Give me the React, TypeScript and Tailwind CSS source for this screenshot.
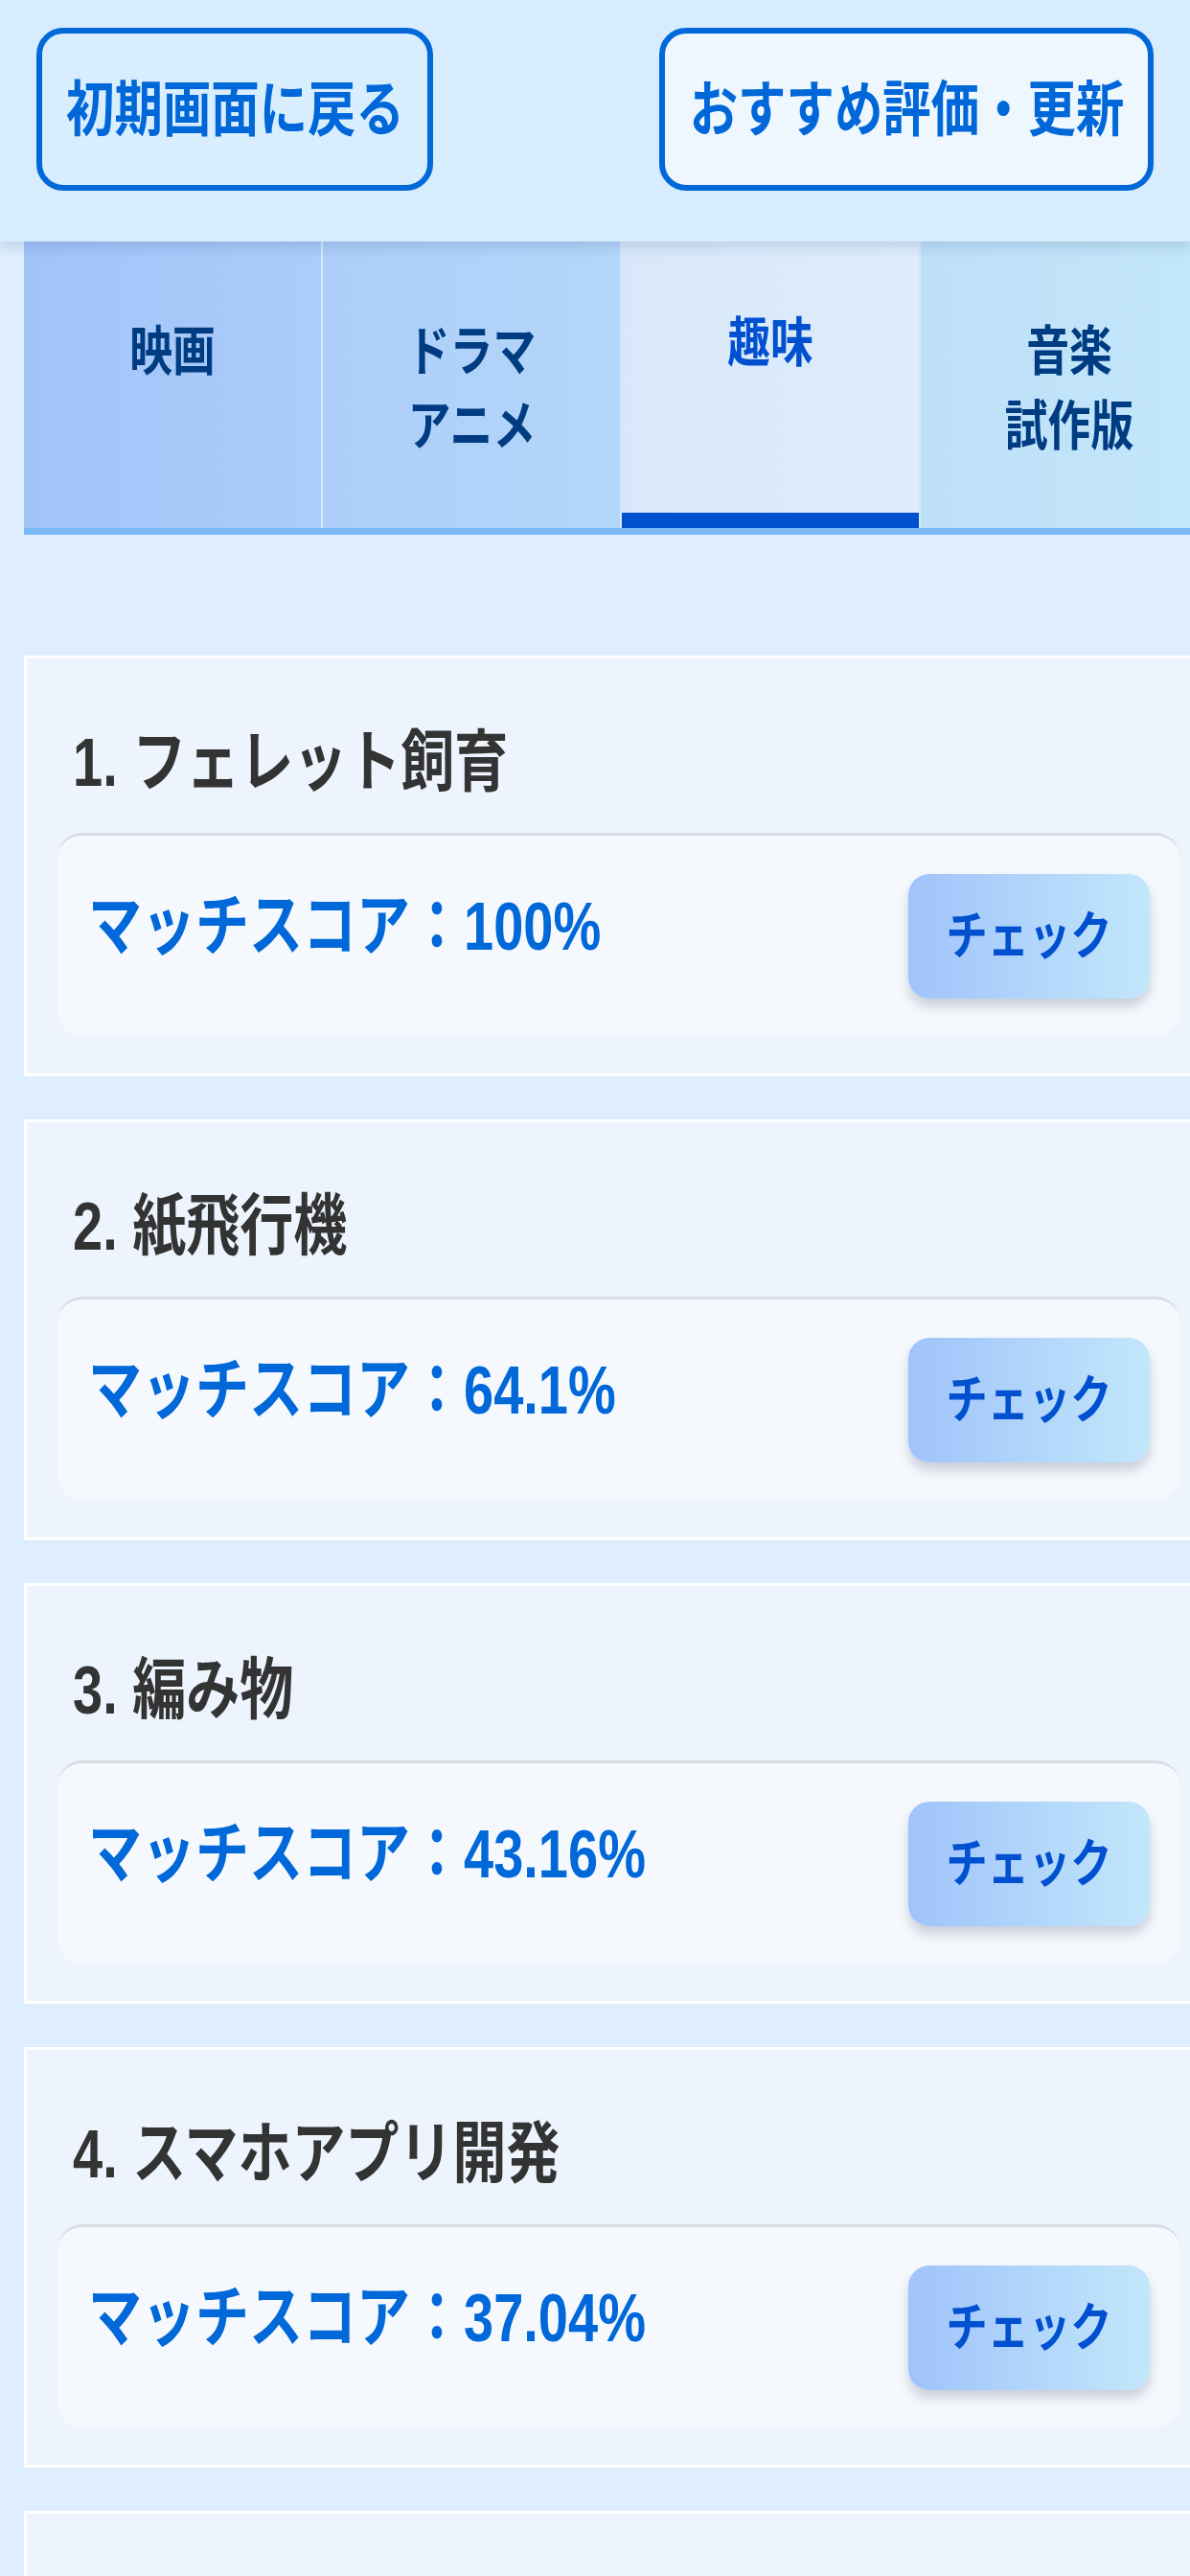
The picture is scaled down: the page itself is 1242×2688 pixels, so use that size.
import type { ReactNode } from 'react'

type Hobby = {
  title: string
  score: string
}

const hobbies: Hobby[] = [
  { title: 'フェレット飼育', score: '100%' },
  { title: '紙飛行機', score: '64.1%' },
  { title: '編み物', score: '43.16%' },
  { title: 'スマホアプリ開発', score: '37.04%' },
]

const tabs = [
  { lines: ['映画'], active: false, bg: 'bg-linear-to-r from-[#a1c3f9] to-[#abcdf9]' },
  { lines: ['ドラマ', 'アニメ'], active: false, bg: 'bg-linear-to-r from-[#adcef9] to-[#b4d6f9]' },
  { lines: ['趣味'], active: true, bg: 'bg-linear-to-r from-[#d8e8fa] to-[#ddedfc]' },
  { lines: ['音楽', '試作版'], active: false, bg: 'bg-linear-to-r from-[#bde0f9] to-[#c3e7fa]' },
]

// the screenshot's glyphs are narrower than square, so text gets squeezed horizontally
function Squish({ children, className }: { children: ReactNode; className: string }) {
  return <span className={`inline-block whitespace-nowrap scale-x-80 ${className}`}>{children}</span>
}

function HobbyCard({ index, hobby }: { index: number; hobby: Hobby }) {
  return (
    <div className="ml-[25px] mb-[45px] h-[439px] w-[1242px] shrink-0 border-[3px] border-white bg-[#edf4fd] pl-[32px] pt-[69px]">
      <p className="pl-[16px] text-[70px] font-bold leading-[80px] text-[#333333]">
        <Squish className="origin-left">{index}. {hobby.title}</Squish>
      </p>
      <div className="mt-[33px] flex h-[212px] w-[1172px] items-center justify-between rounded-[26px] border-t-[3px] border-[#d5dce4] bg-[#f5f9fe] pl-[32px] pr-[32px]">
        <p className="-mt-[20px] text-[70px] font-bold leading-[80px] text-[#0068d8]">
          <Squish className="origin-left">マッチスコア：{hobby.score}</Squish>
        </p>
        <button
          type="button"
          className="flex h-[130px] w-[252px] items-center justify-center rounded-[22px] bg-linear-to-r from-[#a0c3fa] to-[#c2e7fa] shadow-[0_8px_12px_rgba(40,60,90,0.22)]"
        >
          <Squish className="origin-center text-[54px] font-bold leading-[60px] text-[#0050d0]">チェック</Squish>
        </button>
      </div>
    </div>
  )
}

export default function App() {
  return (
    <div className="h-[2688px] w-full overflow-hidden bg-[#deeefe] font-['Liberation_Sans','Noto_Sans_CJK_JP',sans-serif]">
      <header className="relative z-10 flex h-[252px] items-start justify-between bg-[#d7edfe] px-[38px] pt-[29px] shadow-[0_6px_12px_rgba(20,50,100,0.14)]">
        <button
          type="button"
          className="flex h-[170px] w-[414px] items-center justify-center rounded-[28px] border-[6px] border-[#0068d8] bg-[#d8eefe]"
        >
          <Squish className="origin-center text-[63px] font-bold leading-[70px] text-[#0067d9]">初期画面に戻る</Squish>
        </button>
        <button
          type="button"
          className="flex h-[170px] w-[516px] items-center justify-center rounded-[28px] border-[6px] border-[#0068d8] bg-[#eef6fe]"
        >
          <Squish className="origin-center text-[63px] font-bold leading-[70px] text-[#0067d9]">おすすめ評価・更新</Squish>
        </button>
      </header>

      <nav className="ml-[25px] w-[1250px] border-b-[7px] border-[#7ab8f8]">
        <div className="flex h-[299px] gap-[2px] bg-[#d6e8fb]">
          {tabs.map((tab) => (
            <div
              key={tab.lines.join('')}
              className={`relative flex w-[310px] shrink-0 flex-col items-center ${tab.bg} ${tab.active ? 'pt-[67px] text-[#0050d0]' : 'pt-[76px] text-[#003c82]'}`}
            >
              {tab.lines.map((line) => (
                <span key={line} className="text-[56px] font-bold leading-[78px]">
                  <Squish className="origin-center">{line}</Squish>
                </span>
              ))}
              {tab.active ? <div className="absolute bottom-0 left-0 h-[16px] w-full bg-[#0050d0]" /> : null}
            </div>
          ))}
        </div>
      </nav>

      <main className="pt-[126px]">
        {hobbies.map((hobby, i) => (
          <HobbyCard key={hobby.title} index={i + 1} hobby={hobby} />
        ))}
        {/* next card, only its top edge is on screen */}
        <div className="ml-[25px] h-[439px] w-[1242px] border-[3px] border-white bg-[#edf4fd]" />
      </main>
    </div>
  )
}
